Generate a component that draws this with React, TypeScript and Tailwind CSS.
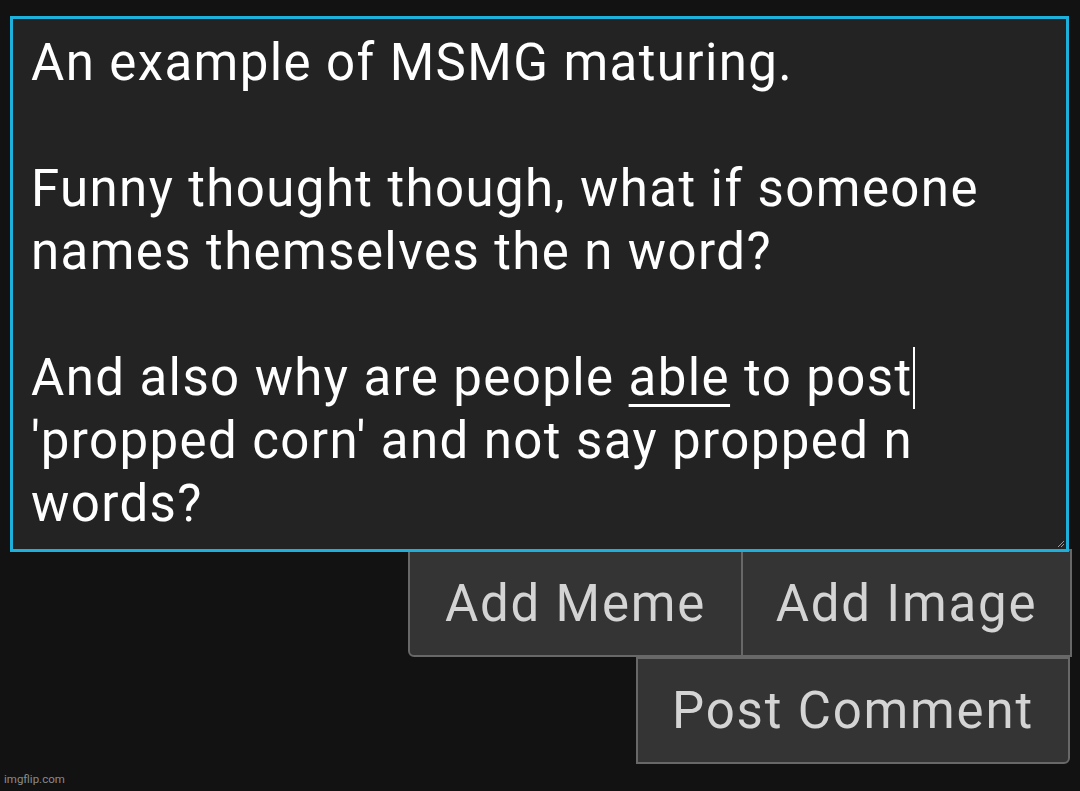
import React from "react";

// ─── COMMENT BOX ────────────────────────────────────────────────────────

const ResizeGrip = () => (
  <svg
    className="absolute right-[1px] bottom-[1px] w-[8px] h-[8px]"
    viewBox="0 0 8 8"
  >
    <path d="M7 1L1 7M7 4L4 7" stroke="#9a9a9a" strokeWidth="1" />
  </svg>
);

const CommentBox = () => (
  <div className="relative ml-[10px] mr-[11px] mt-[16px] h-[536px] border-[3px] border-[#1cb0da] bg-[#232323] pl-[18px] pr-4 pt-[12px] text-[51px] leading-[63px] tracking-[1.4px] text-white">
    <p>An example of MSMG maturing.</p>
    <p>&nbsp;</p>
    <p>Funny thought though, what if someone</p>
    <p>names themselves the n word?</p>
    <p>&nbsp;</p>
    <p>
      And also why are people{" "}
      <span className="underline decoration-[3px] underline-offset-[9px]">
        able
      </span>{" "}
      to post
      <span className="inline-block w-[2px] h-[62px] bg-white align-[-14px]" />
    </p>
    <p>'propped corn' and not say propped n</p>
    <p>words?</p>
    <ResizeGrip />
  </div>
);

// ─── BUTTONS ────────────────────────────────────────────────────────────

const btn =
  "h-[104px] px-0 whitespace-nowrap text-center bg-[#343434] text-[#d4d4d4] text-[51px] leading-none tracking-[1.8px]";

export default function App() {
  return (
    <div
      className="relative h-[791px] w-full bg-[#121212] overflow-hidden"
      style={{ fontFamily: "Roboto, 'Noto Sans', sans-serif" }}
    >
      <CommentBox />

      <div className="flex justify-end mr-[8px] -mt-[3px]">
        <div className="flex border-2 border-[#686868] rounded-bl-[6px] bg-[#343434]">
          <button className={btn + " w-[331px] rounded-bl-[6px]"}>Add Meme</button>
          <div className="w-[2px] bg-[#686868]" />
          <button className={btn + " w-[327px]"}>Add Image</button>
        </div>
      </div>

      <div className="flex justify-end mr-[10px]">
        <button
          className={
            btn +
            " w-[434px] h-[107px] border-2 border-[#686868] rounded-br-[6px]"
          }
        >
          Post Comment
        </button>
      </div>

      <div className="absolute left-[4px] bottom-[3px] text-[11.5px] text-[#8a8a8a]">
        imgflip.com
      </div>
    </div>
  );
}
